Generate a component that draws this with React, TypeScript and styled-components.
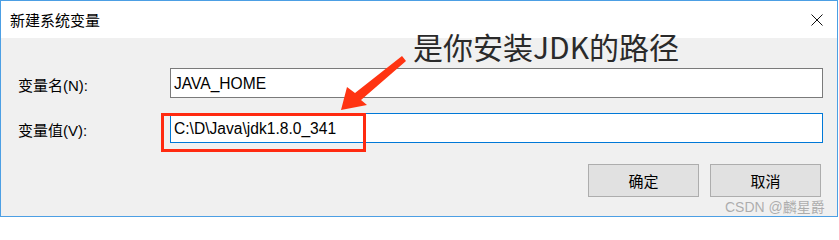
import * as React from 'react';
import styled, { createGlobalStyle } from 'styled-components';

const GlobalStyle = createGlobalStyle`
    html, body {
        margin: 0;
        padding: 0;
        background: #ffffff;
    }
`;

const uiFont = `"Liberation Sans", "Noto Sans CJK SC", sans-serif`;

const Window = styled.div`
    position: relative;
    box-sizing: border-box;
    width: 838px;
    height: 217px;
    border: 1px solid #4c9fe4;
    background: #f0f0f0;
    display: flex;
    flex-direction: column;
    font-family: ${ uiFont };
    color: #000;
    overflow: hidden;
`;

const TitleBar = styled.div`
    height: 37px;
    background: #ffffff;
    display: flex;
    align-items: center;
    justify-content: space-between;
    padding: 0 9px;
    font-size: 15px;
    font-family: "Noto Sans CJK SC", sans-serif;
`;

const CloseButton = styled.div`
    width: 12px;
    height: 12px;
    margin-right: 5px;
    display: flex;
    svg {
        display: block;
    }
`;

const Body = styled.div`
    flex: 1;
    padding: 30px 14px 0 17px;
    display: flex;
    flex-direction: column;
`;

const Form = styled.div`
    display: grid;
    grid-template-columns: 152px 1fr;
    row-gap: 15px;
    align-items: center;
`;

const Label = styled.label`
    font-size: 15px;
    padding-top: 2px;
`;

const Field = styled.div<{ $focused?: boolean }>`
    box-sizing: border-box;
    height: 30px;
    background: #fff;
    border: 1px solid ${ p => p.$focused ? '#0078d7' : '#7a7a7a' };
    display: flex;
    align-items: center;
    padding-left: 3px;
    font-size: 15.6px;
    padding-top: 1px;
`;

const Buttons = styled.div`
    display: flex;
    justify-content: flex-end;
    gap: 11px;
    margin-top: 21px;
    padding-right: 2px;
`;

const Button = styled.div`
    box-sizing: border-box;
    width: 111px;
    height: 33px;
    background: #e1e1e1;
    border: 1px solid #adadad;
    display: flex;
    align-items: center;
    justify-content: center;
    font-size: 15px;
    font-family: "Noto Sans CJK SC", sans-serif;
`;

const Highlight = styled.div`
    position: absolute;
    left: 160px;
    top: 112px;
    width: 205px;
    height: 39px;
    box-sizing: border-box;
    border: 3px solid #ff2a10;
`;

const Arrow = styled.svg`
    position: absolute;
    left: 0;
    top: 0;
    pointer-events: none;
`;

const Note = styled.div`
    position: absolute;
    left: 412px;
    top: 25px;
    font-size: 30px;
    font-weight: 400;
    line-height: 40px;
    color: #2a2a2a;
    font-family: "Noto Sans CJK SC", sans-serif;
`;

const Watermark = styled.div`
    position: absolute;
    left: 724px;
    top: 195px;
    font-size: 14px;
    color: rgba(150, 150, 150, 0.75);
    font-family: "Liberation Sans", "Noto Sans CJK SC", sans-serif;
`;

const App: React.FC = () => (
    <>
        <GlobalStyle/>
        <Window>
            <TitleBar>
                <span>新建系统变量</span>
                <CloseButton>
                    <svg width="12" height="12" viewBox="0 0 12 12">
                        <path d="M0.5 0.5 L11.5 11.5 M11.5 0.5 L0.5 11.5" stroke="#111" strokeWidth="1" fill="none"/>
                    </svg>
                </CloseButton>
            </TitleBar>
            <Body>
                <Form>
                    <Label>变量名(N):</Label>
                    <Field>JAVA_HOME</Field>
                    <Label>变量值(V):</Label>
                    <Field $focused>C:\D\Java\jdk1.8.0_341</Field>
                </Form>
                <Buttons>
                    <Button>确定</Button>
                    <Button>取消</Button>
                </Buttons>
            </Body>
            <Highlight/>
            <Arrow width="838" height="217" viewBox="0 0 838 217">
                <polygon
                    points="340,109 346,86 354,92 401,55 405,60 360,99 366,104"
                    fill="#ff3412"
                />
            </Arrow>
            <Note>是你安装JDK的路径</Note>
            <Watermark>CSDN @麟星爵</Watermark>
        </Window>
    </>
);

export default App;
